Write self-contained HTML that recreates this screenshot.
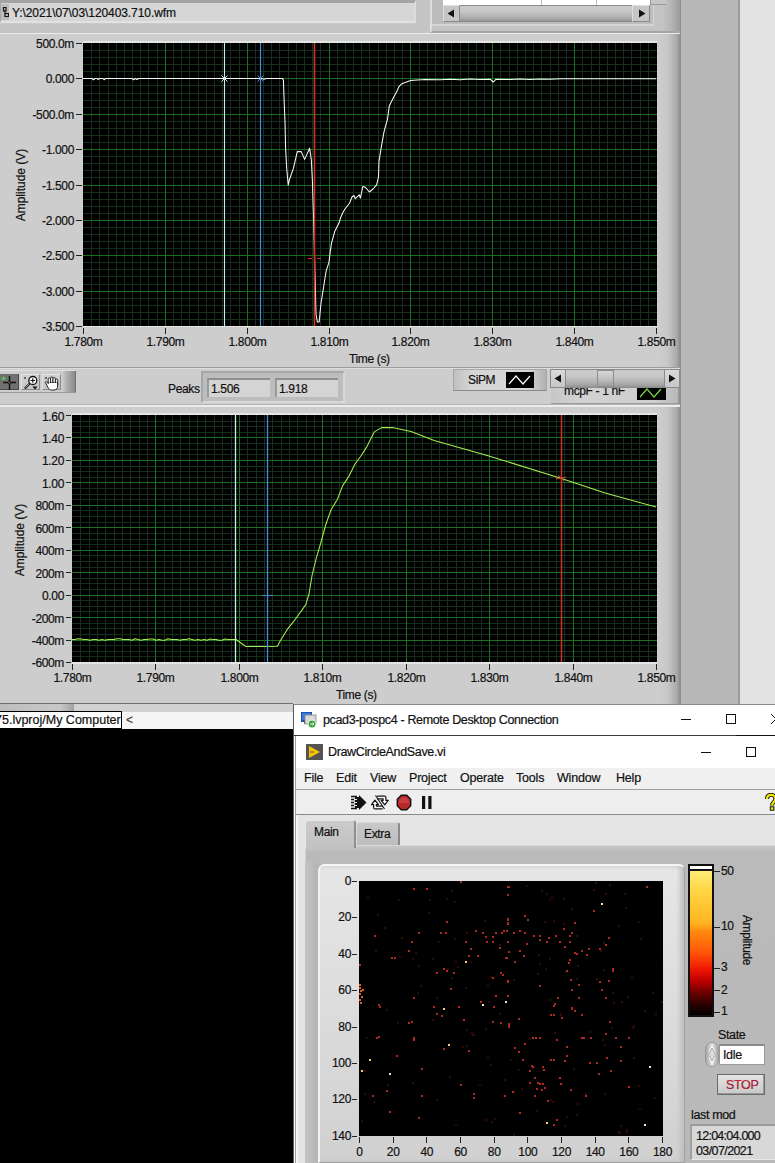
<!DOCTYPE html><html><head><meta charset="utf-8"><style>
*{box-sizing:border-box}
html,body{margin:0;padding:0}
body{width:775px;height:1163px;overflow:hidden;position:relative;background:#cdcdcd;font-family:"Liberation Sans",sans-serif;color:#111}
.a{position:absolute}
.t{position:absolute;white-space:nowrap;font-size:12px;line-height:14px;letter-spacing:-0.35px;-webkit-text-stroke:0.2px #111}
</style></head><body>
<div class="a" style="left:0;top:0;width:680px;height:34px;background:#c4c4c4"></div>
<div class="a" style="left:0;top:0;width:416px;height:24px;background:#c9c9c9"></div>
<div class="a" style="left:0;top:0;width:416px;height:23px;background:#d6d6d6;border-top:3px solid #a4a4a4;border-left:1px solid #a8a8a8;border-bottom:2px solid #e2e2e2;border-right:2px solid #dcdcdc"></div>
<div class="a" style="left:1px;top:4px;width:8px;height:16px;background:#bdbdbd"></div>
<svg class="a" style="left:2px;top:6px" width="7" height="11"><path d="M1.5 1.5h2.5v3.5h-2.5zM3 5v2.5M3 7.5h3.5v3h-3.5z" stroke="#111" stroke-width="1.2" fill="none"/></svg>
<div class="t" style="left:12px;top:6px;font-size:12px;letter-spacing:-0.08px;color:#111">Y:\2021\07\03\120403.710.wfm</div>
<div class="a" style="left:430px;top:0;width:250px;height:33px;background:#c4c4c4;border-left:2px solid #dedede;border-bottom:2px solid #a4a4a4"></div>
<div class="a" style="left:430px;top:0;width:250px;height:31px;background:linear-gradient(90deg,rgba(0,0,0,0) 0,rgba(0,0,0,0) 232px,#b8b8b8 240px,#9c9c9c 250px)"></div>
<div class="a" style="left:432px;top:0;width:222px;height:26px;background:#bcbcbc;border-right:1px solid #d8d8d8;border-bottom:2px solid #d4d4d4"></div>
<div class="a" style="left:443px;top:0;width:207px;height:5px;background:#fff"></div>
<div class="a" style="left:541px;top:0;width:1px;height:5px;background:#bbb"></div>
<div class="a" style="left:596px;top:0;width:1px;height:5px;background:#bbb"></div>
<div class="a" style="left:650px;top:0;width:16px;height:5px;background:#c6c6c6;border-left:1px solid #999;border-bottom:1px solid #999"></div>
<div class="a" style="left:443px;top:5px;width:207px;height:17px;background:linear-gradient(#cccccc,#c8c8c8 35%,#acacac 80%,#959595);border:1px solid #8a8a8a"></div>
<div class="a" style="left:443px;top:5px;width:17px;height:17px;background:#c6c6c6;border:1px solid #8a8a8a;border-top-color:#dedede;border-left-color:#dedede"></div>
<div class="a" style="left:632px;top:5px;width:18px;height:17px;background:#c6c6c6;border:1px solid #8a8a8a;border-top-color:#dedede;border-left-color:#dedede"></div>
<svg class="a" style="left:443px;top:5px" width="207" height="17"><path d="M4.5 8.5L11 4.5V12.5z" fill="#111"/><path d="M202.5 8.5L196 4.5V12.5z" fill="#111"/></svg>
<div class="a" style="left:0;top:33px;width:680px;height:1px;background:#ececec"></div>
<div class="a" style="left:660px;top:34px;width:20px;height:670px;background:linear-gradient(90deg,#cdcdcd,#c6c6c6 40%,#a8a8a8 85%,#8c8c8c)"></div>
<div class="a" style="left:680px;top:0;width:60px;height:704px;background:#b7b7b7;border-left:1px solid #8e8e8e;border-right:2px solid #9a9a9a"></div>
<div class="a" style="left:740px;top:0;width:35px;height:704px;background:#e3e3e3"></div>
<div class="a" style="left:83px;top:41px;width:574px;height:286px;background:#e4e4e4"></div>
<svg class="a" style="left:83px;top:43px" width="574" height="283">
<rect width="574" height="283" fill="#000"/>
<path d="M8.5 0V283M16.5 0V283M25.5 0V283M33.5 0V283M41.5 0V283M49.5 0V283M57.5 0V283M65.5 0V283M74.5 0V283M90.5 0V283M98.5 0V283M106.5 0V283M115.5 0V283M123.5 0V283M131.5 0V283M139.5 0V283M147.5 0V283M156.5 0V283M172.5 0V283M180.5 0V283M188.5 0V283M196.5 0V283M205.5 0V283M213.5 0V283M221.5 0V283M229.5 0V283M237.5 0V283M254.5 0V283M262.5 0V283M270.5 0V283M278.5 0V283M286.5 0V283M295.5 0V283M303.5 0V283M311.5 0V283M319.5 0V283M336.5 0V283M344.5 0V283M352.5 0V283M360.5 0V283M368.5 0V283M377.5 0V283M385.5 0V283M393.5 0V283M401.5 0V283M417.5 0V283M426.5 0V283M434.5 0V283M442.5 0V283M450.5 0V283M458.5 0V283M467.5 0V283M475.5 0V283M483.5 0V283M499.5 0V283M508.5 0V283M516.5 0V283M524.5 0V283M532.5 0V283M540.5 0V283M548.5 0V283M557.5 0V283M565.5 0V283M0 7.5H574M0 14.5H574M0 21.5H574M0 28.5H574M0 42.5H574M0 50.5H574M0 57.5H574M0 64.5H574M0 78.5H574M0 85.5H574M0 92.5H574M0 99.5H574M0 113.5H574M0 120.5H574M0 127.5H574M0 134.5H574M0 149.5H574M0 156.5H574M0 163.5H574M0 170.5H574M0 184.5H574M0 191.5H574M0 198.5H574M0 205.5H574M0 219.5H574M0 226.5H574M0 233.5H574M0 241.5H574M0 255.5H574M0 262.5H574M0 269.5H574M0 276.5H574" stroke="#162f1d" fill="none"/>
<path d="M82.5 0V283M164.5 0V283M246.5 0V283M327.5 0V283M409.5 0V283M491.5 0V283M0 35.5H574M0 71.5H574M0 106.5H574M0 142.5H574M0 177.5H574M0 212.5H574M0 248.5H574" stroke="#1a7020" fill="none"/>
<svg class="a" style="left:83px;top:43px" width="573" height="283">
<path d="M0 35.5 L9 35.5 L10.5 36.8 L12 35.5 L14 35.5 L15 36.5 L16.5 35.5 L20 35.5 L21 36.8 L22.5 35.5 L49 35.5 L50.5 36.8 L52 35.5 L54 36.5 L55.5 35.5 L157 35.5 L179 35.5 L181 36.3 L183 35.5 L199.3 35.4 L200.4 37 L200.9 51.6 L202 79.5 L202.6 105.2 L203.7 125.4 L205.2 142.1 L206.5 136.5 L210.4 125.4 L214.3 108.6 L218.3 108.6 L221.6 116.4 L226.6 105.2 L228.3 116.4 L229.4 137.7 L230.4 169 L231.2 200 L232.3 242.8 L233 271 L234.3 278.9 L236.2 278.9 L236.8 272.4 L238.1 259.5 L240 248 L242 235 L243.3 227.3 L245.9 219.6 L247.2 209.2 L248.5 200.2 L251.7 188.6 L256.2 179.6 L257.5 175 L260 169.3 L262 166 L266.5 160.2 L269.1 153.8 L271 152.5 L272.3 155.7 L276.2 151.8 L277.4 155 L279.8 143.6 L282.2 144.2 L286.4 149 L290 146 L293.6 141.8 L295.5 134 L296 118.3 L297.9 106.3 L300.9 89.4 L302.1 84.6 L304.5 76.2 L306.3 62.9 L308.1 59.3 L310.5 54.5 L313.5 49.1 L315.9 43.7 L318.9 40.7 L323.7 38.9 L327.3 37.6 L334.5 37 L342 36.6 L357 36.8 L367 36.2 L377 36.8 L387 36 L397 36.5 L407 36.2 L410.4 39 L413 36.2 L427 36.5 L437 36 L447 36.4 L457 36 L467 36.3 L478 35.8 L517 35.8 L574 35.8" stroke="#f8f8f8" stroke-width="1.05" fill="none" stroke-linejoin="round"/>
<path d="M141.5 0V283" stroke="#c0f0f4" stroke-width="1.1"/>
<path d="M177.5 0V283" stroke="#4a88d8" stroke-width="1.2"/>
<path d="M231.5 0V283" stroke="#d8342a" stroke-width="1.5"/>
<path d="M138.5 32.5l6 6M144.5 32.5l-6 6" stroke="#c0f0f4" stroke-width="1"/>
<path d="M174.5 32.5l6 6M180.5 32.5l-6 6" stroke="#4a88d8" stroke-width="1"/>
<path d="M225 215.5h4M234 215.5h4M231.5 210v3M231.5 218v3" stroke="#d8342a" stroke-width="1.2"/>
</svg>
<div class="t" style="right:701px;top:37px;text-align:right">500.0m</div>
<div class="a" style="left:76px;top:43px;width:6px;height:1px;background:#222"></div>
<div class="t" style="right:701px;top:72.4px;text-align:right">0.000</div>
<div class="a" style="left:76px;top:78px;width:6px;height:1px;background:#222"></div>
<div class="t" style="right:701px;top:107.8px;text-align:right">-500.0m</div>
<div class="a" style="left:76px;top:114px;width:6px;height:1px;background:#222"></div>
<div class="t" style="right:701px;top:143.2px;text-align:right">-1.000</div>
<div class="a" style="left:76px;top:149px;width:6px;height:1px;background:#222"></div>
<div class="t" style="right:701px;top:178.6px;text-align:right">-1.500</div>
<div class="a" style="left:76px;top:185px;width:6px;height:1px;background:#222"></div>
<div class="t" style="right:701px;top:214px;text-align:right">-2.000</div>
<div class="a" style="left:76px;top:220px;width:6px;height:1px;background:#222"></div>
<div class="t" style="right:701px;top:249.4px;text-align:right">-2.500</div>
<div class="a" style="left:76px;top:255px;width:6px;height:1px;background:#222"></div>
<div class="t" style="right:701px;top:284.8px;text-align:right">-3.000</div>
<div class="a" style="left:76px;top:291px;width:6px;height:1px;background:#222"></div>
<div class="t" style="right:701px;top:320.2px;text-align:right">-3.500</div>
<div class="a" style="left:76px;top:326px;width:6px;height:1px;background:#222"></div>
<div class="t" style="top:185px;left:20.5px;transform:translate(-50%,-50%) rotate(-90deg);letter-spacing:0">Amplitude (V)</div>
<div class="a" style="left:83px;top:328px;width:1px;height:6px;background:#222"></div>
<div class="t" style="left:83.5px;top:335px;width:60px;margin-left:-30px;text-align:center">1.780m</div>
<div class="a" style="left:165px;top:328px;width:1px;height:6px;background:#222"></div>
<div class="t" style="left:165.5px;top:335px;width:60px;margin-left:-30px;text-align:center">1.790m</div>
<div class="a" style="left:247px;top:328px;width:1px;height:6px;background:#222"></div>
<div class="t" style="left:247.5px;top:335px;width:60px;margin-left:-30px;text-align:center">1.800m</div>
<div class="a" style="left:329px;top:328px;width:1px;height:6px;background:#222"></div>
<div class="t" style="left:329.5px;top:335px;width:60px;margin-left:-30px;text-align:center">1.810m</div>
<div class="a" style="left:410px;top:328px;width:1px;height:6px;background:#222"></div>
<div class="t" style="left:410.5px;top:335px;width:60px;margin-left:-30px;text-align:center">1.820m</div>
<div class="a" style="left:492px;top:328px;width:1px;height:6px;background:#222"></div>
<div class="t" style="left:492.5px;top:335px;width:60px;margin-left:-30px;text-align:center">1.830m</div>
<div class="a" style="left:574px;top:328px;width:1px;height:6px;background:#222"></div>
<div class="t" style="left:574.5px;top:335px;width:60px;margin-left:-30px;text-align:center">1.840m</div>
<div class="a" style="left:656px;top:328px;width:1px;height:6px;background:#222"></div>
<div class="t" style="left:656.5px;top:335px;width:60px;margin-left:-30px;text-align:center">1.850m</div>
<div class="t" style="left:349px;top:352px">Time (s)</div>
<div class="a" style="left:0;top:367px;width:680px;height:1px;background:#9c9c9c"></div>
<div class="a" style="left:0;top:368px;width:680px;height:1px;background:#dedede"></div>
<div class="a" style="left:0;top:370px;width:76px;height:23px;background:linear-gradient(90deg,#cdcdcd 0,#cdcdcd 62px,#b4b4b4 66px,#8a8a8a 75px,#5a5a5a 76px);border-top:1px solid #e0e0e0;border-bottom:1px solid #9a9a9a"></div>
<div class="a" style="left:0;top:374px;width:19px;height:16px;background:#707070;border-right:1px solid #4a4a4a;border-bottom:1px solid #4a4a4a"></div>
<div class="a" style="left:21px;top:374px;width:19px;height:16px;background:linear-gradient(#d0d0d0,#c4c4c4);border-right:1px solid #8a8a8a;border-bottom:1px solid #8a8a8a;border-top:1px solid #e4e4e4;border-left:1px solid #e4e4e4"></div>
<div class="a" style="left:42px;top:374px;width:19px;height:16px;background:linear-gradient(#d0d0d0,#c4c4c4);border-right:1px solid #8a8a8a;border-bottom:1px solid #8a8a8a;border-top:1px solid #e4e4e4;border-left:1px solid #e4e4e4"></div>
<svg class="a" style="left:0;top:370px" width="76" height="23"><path d="M9.5 6V20M3 12.5H16" stroke="#111" stroke-width="1.4"/><circle cx="9.5" cy="12.5" r="1.5" fill="#707070" stroke="#111" stroke-width="1"/><path d="M1.5 8.5h4M3.5 6.5v4" stroke="#5c5" stroke-width="1.3"/><rect x="24" y="7" width="2" height="2" fill="#666"/><circle cx="32.8" cy="10.5" r="4" fill="#fff" stroke="#111" stroke-width="1.3"/><path d="M30.6 10.5h4.4M32.8 8.3v4.4" stroke="#111" stroke-width="1.1"/><path d="M29.8 13.5l-5 5" stroke="#111" stroke-width="2"/><path d="M25.2 17.8l4-4" stroke="#fff" stroke-width="0.6"/><path d="M32.5 16.5h5l-2.5 3z" fill="#111"/><rect x="45" y="7" width="2" height="2" fill="#666"/><rect x="48.2" y="8" width="2.4" height="8" rx="1.2" fill="#fff" stroke="#111" stroke-width="0.9"/><rect x="50.6" y="7" width="2.4" height="8" rx="1.2" fill="#fff" stroke="#111" stroke-width="0.9"/><rect x="53" y="7.6" width="2.4" height="8" rx="1.2" fill="#fff" stroke="#111" stroke-width="0.9"/><rect x="55.4" y="9" width="2.3" height="7" rx="1.15" fill="#fff" stroke="#111" stroke-width="0.9"/><path d="M48.2 13.5l-1.3-1.5c-0.8-0.8-1.8-0.2-1.3 0.7L48.5 18.5c0.8 1 1.8 1.5 3 1.5h2.5c2.2 0 3.7-1.8 3.7-4V13H48.2z" fill="#fff" stroke="#111" stroke-width="0.9"/><path d="M48.9 13.6H57" stroke="#fff" stroke-width="1.2"/></svg>
<div class="t" style="left:168px;top:382px;font-size:12px">Peaks</div>
<div class="a" style="left:201px;top:371px;width:144px;height:32px;background:#bdbdbd;border:2px solid #a6a6a6;border-right-color:#d8d8d8;border-bottom-color:#d8d8d8"></div>
<div class="a" style="left:207px;top:378px;width:63px;height:19px;background:#d4d4d4;border-top:2px solid #8f8f8f;border-left:2px solid #9a9a9a"></div>
<div class="a" style="left:275px;top:378px;width:63px;height:19px;background:#d4d4d4;border-top:2px solid #8f8f8f;border-left:2px solid #9a9a9a"></div>
<div class="t" style="left:211px;top:382px">1.506</div>
<div class="t" style="left:279px;top:382px">1.918</div>
<div class="a" style="left:453px;top:369px;width:94px;height:22px;background:linear-gradient(90deg,#c0c0c0,#d6d6d6 20%,#d6d6d6 80%,#b0b0b0);border:1px solid #a8a8a8;border-bottom-color:#8a8a8a"></div>
<div class="t" style="left:468px;top:373px">SiPM</div>
<svg class="a" style="left:506px;top:372px" width="28" height="16"><rect width="28" height="16" fill="#000"/><path d="M3 12L10 4L17 12L24 4" stroke="#fff" stroke-width="1.2" fill="none"/></svg>
<div class="a" style="left:551px;top:383px;width:127px;height:21px;background:linear-gradient(90deg,#c6c6c6,#d2d2d2 20%,#cfcfcf 80%,#b8b8b8);border-bottom:1px solid #9a9a9a"></div>
<div class="t" style="left:564px;top:384px;font-size:12px">mcpF - 1 nF</div>
<svg class="a" style="left:637px;top:386px" width="29" height="14"><rect width="29" height="14" fill="#000"/><path d="M3 11L10 3L17 11L24 3" stroke="#7ad23a" stroke-width="1.2" fill="none"/></svg>
<div class="a" style="left:550px;top:369px;width:130px;height:19px;background:linear-gradient(#cccccc,#c8c8c8 35%,#acacac 80%,#959595);border:1px solid #8c8c8c"></div>
<div class="a" style="left:550px;top:369px;width:16px;height:19px;background:linear-gradient(#dadada,#c6c6c6);border:1px solid #8a8a8a"></div>
<div class="a" style="left:664px;top:369px;width:16px;height:19px;background:linear-gradient(#dadada,#c6c6c6);border:1px solid #8a8a8a"></div>
<div class="a" style="left:597px;top:370px;width:17px;height:17px;background:linear-gradient(#d8d8d8,#bcbcbc 60%,#9c9c9c);border:1px solid #8c8c8c"></div>
<svg class="a" style="left:550px;top:369px" width="130" height="19"><path d="M4.5 9.5L11 5.5V13.5z" fill="#111"/><path d="M125.5 9.5L119 5.5V13.5z" fill="#111"/></svg>
<div class="a" style="left:0;top:404px;width:680px;height:1px;background:#b4b4b4"></div>
<div class="a" style="left:0;top:405px;width:680px;height:2px;background:#ececec"></div>
<div class="a" style="left:72px;top:413px;width:585px;height:251px;background:#e4e4e4"></div>
<svg class="a" style="left:72px;top:415px" width="585" height="247">
<rect width="585" height="247" fill="#000"/>
<path d="M8.5 0V247M17.5 0V247M25.5 0V247M33.5 0V247M42.5 0V247M50.5 0V247M58.5 0V247M67.5 0V247M75.5 0V247M92.5 0V247M100.5 0V247M108.5 0V247M117.5 0V247M125.5 0V247M133.5 0V247M142.5 0V247M150.5 0V247M159.5 0V247M175.5 0V247M184.5 0V247M192.5 0V247M200.5 0V247M209.5 0V247M217.5 0V247M225.5 0V247M234.5 0V247M242.5 0V247M259.5 0V247M267.5 0V247M275.5 0V247M284.5 0V247M292.5 0V247M300.5 0V247M309.5 0V247M317.5 0V247M325.5 0V247M342.5 0V247M350.5 0V247M359.5 0V247M367.5 0V247M375.5 0V247M384.5 0V247M392.5 0V247M400.5 0V247M409.5 0V247M425.5 0V247M434.5 0V247M442.5 0V247M451.5 0V247M459.5 0V247M467.5 0V247M476.5 0V247M484.5 0V247M492.5 0V247M509.5 0V247M517.5 0V247M526.5 0V247M534.5 0V247M542.5 0V247M551.5 0V247M559.5 0V247M567.5 0V247M576.5 0V247M0 6.5H585M0 11.5H585M0 17.5H585M0 28.5H585M0 34.5H585M0 39.5H585M0 51.5H585M0 56.5H585M0 62.5H585M0 73.5H585M0 79.5H585M0 84.5H585M0 95.5H585M0 101.5H585M0 107.5H585M0 118.5H585M0 124.5H585M0 129.5H585M0 140.5H585M0 146.5H585M0 152.5H585M0 163.5H585M0 168.5H585M0 174.5H585M0 185.5H585M0 191.5H585M0 196.5H585M0 208.5H585M0 213.5H585M0 219.5H585M0 230.5H585M0 236.5H585M0 241.5H585" stroke="#162f1d" fill="none"/>
<path d="M83.5 0V247M167.5 0V247M250.5 0V247M334.5 0V247M417.5 0V247M501.5 0V247M0 22.5H585M0 45.5H585M0 67.5H585M0 90.5H585M0 112.5H585M0 135.5H585M0 157.5H585M0 180.5H585M0 202.5H585M0 225.5H585" stroke="#1a7020" fill="none"/>
<svg class="a" style="left:72px;top:415px" width="584" height="247">
<path d="M0 224.5 L3 224.5 L6 223.7 L9 224 L12 224.5 L15 224.5 L18 225.3 L21 224.5 L24 224.5 L27 225.3 L30 224.5 L33 225.3 L36 224.5 L39 224.5 L42 224.5 L45 223.7 L48 223.7 L51 224.5 L54 224.5 L57 224.5 L60 225.3 L63 223.7 L66 224.5 L69 225.3 L72 224.5 L75 224.5 L78 224 L81 224 L84 225.3 L87 224.5 L90 225.3 L93 225.3 L96 223.7 L99 224.5 L102 224.5 L105 224.5 L108 225.3 L111 224.5 L114 224.5 L117 223.7 L120 224.5 L123 225.3 L126 224.5 L129 225.3 L132 224.5 L135 225.3 L138 224 L141 224.5 L144 224.5 L147 225.3 L150 225.3 L153 224 L156 224.5 L159 224.5 L164 224.5 L169 228 L174 231.6 L188 231.4 L205.4 231.3 L208.5 225.4 L214.9 214.9 L223.3 204.3 L233.8 189.6 L237 179 L240.1 160.1 L244.3 143.2 L248.6 128.5 L253.8 109.5 L259.1 94.8 L265.4 84.3 L270.7 70.6 L277 61.1 L283.3 48.5 L289.6 40 L294.9 31.6 L302.3 16.9 L309.6 12.6 L320.2 12.6 L328.6 14.3 L339.1 16.4 L348 20 L362.2 25.6 L416.9 41 L488.7 63.2 L533.1 78 L585 92.3" stroke="#a4ee50" stroke-width="1.05" fill="none" stroke-linejoin="round"/>
<path d="M163.5 0V247" stroke="#c8f0e8" stroke-width="1.3"/>
<path d="M195.5 0V247" stroke="#4a88d8" stroke-width="1.3"/>
<path d="M489.5 0V247" stroke="#d0342a" stroke-width="1.5"/>
<path d="M190 180.5h11" stroke="#4a88d8" stroke-width="1"/>
<path d="M484 64l10 -2M486 60l6 6" stroke="#d04030" stroke-width="1"/>
</svg>
<div class="t" style="right:711px;top:409.5px;text-align:right">1.60</div>
<div class="a" style="left:66px;top:415px;width:5px;height:1px;background:#222"></div>
<div class="t" style="right:711px;top:431.95px;text-align:right">1.40</div>
<div class="a" style="left:66px;top:437px;width:5px;height:1px;background:#222"></div>
<div class="t" style="right:711px;top:454.4px;text-align:right">1.20</div>
<div class="a" style="left:66px;top:460px;width:5px;height:1px;background:#222"></div>
<div class="t" style="right:711px;top:476.85px;text-align:right">1.00</div>
<div class="a" style="left:66px;top:482px;width:5px;height:1px;background:#222"></div>
<div class="t" style="right:711px;top:499.3px;text-align:right">800m</div>
<div class="a" style="left:66px;top:505px;width:5px;height:1px;background:#222"></div>
<div class="t" style="right:711px;top:521.75px;text-align:right">600m</div>
<div class="a" style="left:66px;top:527px;width:5px;height:1px;background:#222"></div>
<div class="t" style="right:711px;top:544.2px;text-align:right">400m</div>
<div class="a" style="left:66px;top:550px;width:5px;height:1px;background:#222"></div>
<div class="t" style="right:711px;top:566.65px;text-align:right">200m</div>
<div class="a" style="left:66px;top:572px;width:5px;height:1px;background:#222"></div>
<div class="t" style="right:711px;top:589.1px;text-align:right">0.00</div>
<div class="a" style="left:66px;top:595px;width:5px;height:1px;background:#222"></div>
<div class="t" style="right:711px;top:611.55px;text-align:right">-200m</div>
<div class="a" style="left:66px;top:617px;width:5px;height:1px;background:#222"></div>
<div class="t" style="right:711px;top:634px;text-align:right">-400m</div>
<div class="a" style="left:66px;top:640px;width:5px;height:1px;background:#222"></div>
<div class="t" style="right:711px;top:656.45px;text-align:right">-600m</div>
<div class="a" style="left:66px;top:662px;width:5px;height:1px;background:#222"></div>
<div class="t" style="top:539.5px;left:20px;transform:translate(-50%,-50%) rotate(-90deg);letter-spacing:0">Amplitude (V)</div>
<div class="a" style="left:72px;top:664px;width:1px;height:6px;background:#222"></div>
<div class="t" style="left:72.5px;top:671px;width:60px;margin-left:-30px;text-align:center">1.780m</div>
<div class="a" style="left:155px;top:664px;width:1px;height:6px;background:#222"></div>
<div class="t" style="left:155.5px;top:671px;width:60px;margin-left:-30px;text-align:center">1.790m</div>
<div class="a" style="left:239px;top:664px;width:1px;height:6px;background:#222"></div>
<div class="t" style="left:239.5px;top:671px;width:60px;margin-left:-30px;text-align:center">1.800m</div>
<div class="a" style="left:322px;top:664px;width:1px;height:6px;background:#222"></div>
<div class="t" style="left:322.5px;top:671px;width:60px;margin-left:-30px;text-align:center">1.810m</div>
<div class="a" style="left:406px;top:664px;width:1px;height:6px;background:#222"></div>
<div class="t" style="left:406.5px;top:671px;width:60px;margin-left:-30px;text-align:center">1.820m</div>
<div class="a" style="left:489px;top:664px;width:1px;height:6px;background:#222"></div>
<div class="t" style="left:489.5px;top:671px;width:60px;margin-left:-30px;text-align:center">1.830m</div>
<div class="a" style="left:573px;top:664px;width:1px;height:6px;background:#222"></div>
<div class="t" style="left:573.5px;top:671px;width:60px;margin-left:-30px;text-align:center">1.840m</div>
<div class="a" style="left:656px;top:664px;width:1px;height:6px;background:#222"></div>
<div class="t" style="left:656.5px;top:671px;width:60px;margin-left:-30px;text-align:center">1.850m</div>
<div class="t" style="left:336px;top:688px">Time (s)</div>
<div class="a" style="left:0;top:703px;width:293px;height:1px;background:#6e6e6e"></div>
<div class="a" style="left:0;top:704px;width:293px;height:8px;background:#d2d2d2"></div>
<div class="a" style="left:0;top:704px;width:74px;height:8px;background:linear-gradient(90deg,#bdbdbd 0,#c8c8c8 60px,#a0a0a0 74px)"></div>
<div class="a" style="left:0;top:712px;width:293px;height:17px;background:#f5f5f5"></div>
<div class="a" style="left:-2px;top:711px;width:124px;height:18px;background:#fff;border:1px solid #000"></div>
<div class="t" style="left:-5px;top:713px;font-size:12.5px;letter-spacing:0;color:#111">75.lvproj/My Computer</div>
<div class="t" style="left:126px;top:713px;font-size:12px;color:#555">&lt;</div>
<div class="a" style="left:0;top:729px;width:293px;height:434px;background:#000"></div>
<div class="a" style="left:293px;top:704px;width:482px;height:459px;background:#fff;border-left:1px solid #5a5a5a;border-top:1px solid #8a8a8a"></div>
<svg class="a" style="left:300px;top:711px" width="18" height="18"><rect x="1" y="1" width="11" height="10" fill="#1a4fb0"/><rect x="2" y="2" width="9" height="7" fill="#3a7ae0"/><rect x="4" y="11" width="5" height="2" fill="#666"/><rect x="5" y="4" width="11" height="9" fill="#d8d8d8" stroke="#888" stroke-width="0.8"/><circle cx="12" cy="13" r="4" fill="#3aa23a" stroke="#fff" stroke-width="0.8"/><path d="M10 13h4M12.5 11.5l1.5 1.5l-1.5 1.5" stroke="#fff" stroke-width="0.9" fill="none"/></svg>
<div class="t" style="left:323px;top:713px;font-size:12.5px;color:#111">pcad3-pospc4 - Remote Desktop Connection</div>
<div class="a" style="left:681px;top:719px;width:10px;height:1px;background:#111"></div>
<div class="a" style="left:726px;top:714px;width:10px;height:10px;border:1px solid #111"></div>
<svg class="a" style="left:770px;top:713px" width="5" height="12"><path d="M1 1L11 11M11 1L1 11" stroke="#111" stroke-width="1"/></svg>
<div class="a" style="left:294px;top:735px;width:481px;height:1px;background:#3a3a3a"></div>
<div class="a" style="left:736px;top:735px;width:39px;height:2px;background:#111"></div>
<div class="a" style="left:295px;top:736px;width:480px;height:427px;background:#fff;border-left:1px solid #9a9a9a"></div>
<svg class="a" style="left:306px;top:744px" width="17" height="16"><rect width="17" height="16" fill="#545454"/><path d="M3 2L14 8L3 14z" fill="#f5c400"/><path d="M4 8h4" stroke="#545454" stroke-width="1"/></svg>
<div class="t" style="left:328px;top:745px;font-size:12.5px;color:#111">DrawCircleAndSave.vi</div>
<div class="a" style="left:701px;top:752px;width:10px;height:1px;background:#111"></div>
<div class="a" style="left:746px;top:747px;width:10px;height:10px;border:1px solid #111"></div>
<div class="a" style="left:296px;top:768px;width:479px;height:21px;background:#f0f0f0"></div>
<div class="t" style="left:304px;top:771px;font-size:12.5px;letter-spacing:-0.2px;color:#111">File</div>
<div class="t" style="left:336px;top:771px;font-size:12.5px;letter-spacing:-0.2px;color:#111">Edit</div>
<div class="t" style="left:370px;top:771px;font-size:12.5px;letter-spacing:-0.2px;color:#111">View</div>
<div class="t" style="left:409px;top:771px;font-size:12.5px;letter-spacing:-0.2px;color:#111">Project</div>
<div class="t" style="left:460px;top:771px;font-size:12.5px;letter-spacing:-0.2px;color:#111">Operate</div>
<div class="t" style="left:516px;top:771px;font-size:12.5px;letter-spacing:-0.2px;color:#111">Tools</div>
<div class="t" style="left:557px;top:771px;font-size:12.5px;letter-spacing:-0.2px;color:#111">Window</div>
<div class="t" style="left:616px;top:771px;font-size:12.5px;letter-spacing:-0.2px;color:#111">Help</div>
<div class="a" style="left:296px;top:789px;width:479px;height:1px;background:#a0a0a0"></div>
<div class="a" style="left:296px;top:790px;width:479px;height:24px;background:#eeeeee"></div>
<div class="a" style="left:296px;top:814px;width:479px;height:1px;background:#8a8a8a"></div>
<svg class="a" style="left:345px;top:790px" width="90" height="25"><path d="M6 6.5h6M6 9.5h6M6 12.5h6M6 15.5h6M6 18.5h6" stroke="#111" stroke-width="1.6"/><path d="M10 7h4V5l7.5 7.5L14 20v-2h-4z" fill="#111"/><path d="M9 9.5h3M9 12.5h3M9 15.5h3" stroke="#fff" stroke-width="0.9"/><path d="M32 7.5H39.5V11M37.5 17.5H30V14" stroke="#111" stroke-width="4" fill="none" stroke-linejoin="round"/><path d="M36.3 10.3L43.2 10.3L39.75 14.8z" fill="#fff" stroke="#111" stroke-width="1.2" stroke-linejoin="round"/><path d="M26.5 14.7L33.4 14.7L29.95 10.2z" fill="#fff" stroke="#111" stroke-width="1.2" stroke-linejoin="round"/><path d="M32 7.5H39.5V11.5M37.5 17.5H30V13.5" stroke="#fff" stroke-width="1.6" fill="none"/><path d="M30.5 5.5L39.5 19" stroke="#111" stroke-width="1.1"/><path d="M56.3 5.3h5.4l4 4v6.4l-4 4h-5.4l-4-4V9.3z" fill="#b82a2a" stroke="#111" stroke-width="1.4"/><path d="M57 7.5h4l2.5 2.5v3h-9v-3z" fill="#d85050" opacity="0.5"/><rect x="77" y="6" width="3.2" height="13" fill="#111"/><rect x="83.3" y="6" width="3.2" height="13" fill="#111"/></svg>
<svg class="a" style="left:764px;top:793px" width="11" height="18"><path d="M3 6c0-3 2-4.2 4.2-4.2S11.5 3.5 11.5 6c0 2.5-3.3 3.2-3.3 5.8v0.7" stroke="#111" stroke-width="4" fill="none"/><path d="M3 6c0-3 2-4.2 4.2-4.2S11.5 3.5 11.5 6c0 2.5-3.3 3.2-3.3 5.8v0.7" stroke="#f0e800" stroke-width="2.2" fill="none"/><rect x="6.3" y="13.8" width="3.6" height="3.4" fill="#f0e800" stroke="#111" stroke-width="1"/></svg>
<div class="a" style="left:296px;top:815px;width:479px;height:348px;background:#e4e4e4"></div>
<div class="a" style="left:296px;top:815px;width:2px;height:348px;background:#f4f4f4"></div>
<div class="a" style="left:305px;top:845px;width:470px;height:318px;background:linear-gradient(#c8c8c8,#bababa 6px,#b9b9b9);border-top:1px solid #d8d8d8;border-left:1px solid #d0d0d0"></div>
<div class="a" style="left:305px;top:820px;width:51px;height:28px;background:linear-gradient(#cbcbcb,#c2c2c2);border:1px solid #e6e6e6;border-right:2px solid #8e8e8e;border-bottom:none;border-radius:3px 3px 0 0"></div>
<div class="a" style="left:306px;top:846px;width:48px;height:3px;background:#c2c2c2"></div>
<div class="t" style="left:314px;top:825px;font-size:12px">Main</div>
<div class="a" style="left:356px;top:822px;width:44px;height:23px;background:linear-gradient(#c8c8c8,#bdbdbd);border:1px solid #dadada;border-right:2px solid #8a8a8a;border-bottom:none;border-radius:3px 3px 0 0"></div>
<div class="t" style="left:364px;top:827px;font-size:12px">Extra</div>
<div class="a" style="left:318px;top:864px;width:367px;height:299px;background:linear-gradient(#e6e6e6,#dcdcdc 50%,#d0d0d0);border:1px solid #a0a0a0;border-top:2px solid #f6f6f6;border-left:2px solid #f2f2f2;border-radius:6px 6px 0 0;box-shadow:inset -4px 0 4px #c0c0c0,-1px 0 0 #9a9a9a"></div>
<div class="a" style="left:305px;top:862px;width:13px;height:301px;background:linear-gradient(90deg,#c4c4c4,#b4b4b4)"></div>
<svg class="a" style="left:359px;top:881px" width="304" height="255"><rect width="304" height="255" fill="#000"/>
<rect x="73" y="138" width="2" height="2" fill="#2e0a08"/>
<rect x="113" y="153" width="2" height="2" fill="#2e0a08"/>
<rect x="190" y="18" width="2" height="2" fill="#2e0a08"/>
<rect x="5" y="212" width="2" height="2" fill="#2e0a08"/>
<rect x="79" y="60" width="2" height="2" fill="#2e0a08"/>
<rect x="302" y="120" width="2" height="2" fill="#2e0a08"/>
<rect x="254" y="121" width="2" height="2" fill="#2e0a08"/>
<rect x="194" y="39" width="2" height="2" fill="#2e0a08"/>
<rect x="193" y="220" width="2" height="2" fill="#2e0a08"/>
<rect x="159" y="188" width="2" height="2" fill="#2e0a08"/>
<rect x="204" y="17" width="2" height="2" fill="#2e0a08"/>
<rect x="230" y="150" width="2" height="2" fill="#2e0a08"/>
<rect x="92" y="9" width="2" height="2" fill="#2e0a08"/>
<rect x="262" y="120" width="2" height="2" fill="#2e0a08"/>
<rect x="218" y="222" width="2" height="2" fill="#2e0a08"/>
<rect x="217" y="233" width="2" height="2" fill="#2e0a08"/>
<rect x="120" y="203" width="2" height="2" fill="#2e0a08"/>
<rect x="135" y="237" width="2" height="2" fill="#2e0a08"/>
<rect x="266" y="26" width="2" height="2" fill="#2e0a08"/>
<rect x="42" y="56" width="2" height="2" fill="#2e0a08"/>
<rect x="293" y="111" width="2" height="2" fill="#2e0a08"/>
<rect x="190" y="77" width="2" height="2" fill="#2e0a08"/>
<rect x="154" y="98" width="2" height="2" fill="#2e0a08"/>
<rect x="107" y="148" width="2" height="2" fill="#2e0a08"/>
<rect x="177" y="229" width="2" height="2" fill="#2e0a08"/>
<rect x="207" y="235" width="2" height="2" fill="#2e0a08"/>
<rect x="260" y="251" width="2" height="2" fill="#2e0a08"/>
<rect x="204" y="42" width="2" height="2" fill="#2e0a08"/>
<rect x="261" y="244" width="2" height="2" fill="#2e0a08"/>
<rect x="274" y="144" width="2" height="2" fill="#2e0a08"/>
<rect x="217" y="54" width="2" height="2" fill="#2e0a08"/>
<rect x="252" y="146" width="2" height="2" fill="#2e0a08"/>
<rect x="87" y="17" width="2" height="2" fill="#2e0a08"/>
<rect x="259" y="250" width="2" height="2" fill="#2e0a08"/>
<rect x="28" y="203" width="2" height="2" fill="#2e0a08"/>
<rect x="125" y="39" width="2" height="2" fill="#2e0a08"/>
<rect x="90" y="195" width="2" height="2" fill="#2e0a08"/>
<rect x="265" y="12" width="2" height="2" fill="#2e0a08"/>
<rect x="187" y="12" width="2" height="2" fill="#2e0a08"/>
<rect x="218" y="84" width="2" height="2" fill="#2e0a08"/>
<rect x="267" y="248" width="2" height="2" fill="#2e0a08"/>
<rect x="154" y="253" width="2" height="2" fill="#2e0a08"/>
<rect x="95" y="20" width="2" height="2" fill="#2e0a08"/>
<rect x="182" y="9" width="2" height="2" fill="#2e0a08"/>
<rect x="61" y="104" width="2" height="2" fill="#2e0a08"/>
<rect x="185" y="40" width="2" height="2" fill="#2e0a08"/>
<rect x="14" y="220" width="2" height="2" fill="#2e0a08"/>
<rect x="96" y="243" width="2" height="2" fill="#2e0a08"/>
<rect x="272" y="96" width="2" height="2" fill="#2e0a08"/>
<rect x="140" y="132" width="2" height="2" fill="#2e0a08"/>
<rect x="195" y="151" width="2" height="2" fill="#2e0a08"/>
<rect x="170" y="157" width="2" height="2" fill="#2e0a08"/>
<rect x="285" y="129" width="2" height="2" fill="#2e0a08"/>
<rect x="131" y="183" width="2" height="2" fill="#2e0a08"/>
<rect x="73" y="77" width="2" height="2" fill="#2e0a08"/>
<rect x="296" y="132" width="2" height="2" fill="#2e0a08"/>
<rect x="167" y="4" width="2" height="2" fill="#2e0a08"/>
<rect x="126" y="147" width="2" height="2" fill="#2e0a08"/>
<rect x="7" y="156" width="2" height="2" fill="#2e0a08"/>
<rect x="192" y="16" width="2" height="2" fill="#2e0a08"/>
<rect x="190" y="118" width="2" height="2" fill="#2e0a08"/>
<rect x="206" y="90" width="2" height="2" fill="#2e0a08"/>
<rect x="214" y="187" width="2" height="2" fill="#2e0a08"/>
<rect x="8" y="16" width="2" height="2" fill="#2e0a08"/>
<rect x="205" y="244" width="2" height="2" fill="#2e0a08"/>
<rect x="77" y="116" width="2" height="2" fill="#2e0a08"/>
<rect x="180" y="82" width="2" height="2" fill="#2e0a08"/>
<rect x="111" y="80" width="2" height="2" fill="#2e0a08"/>
<rect x="112" y="151" width="2" height="2" fill="#2e0a08"/>
<rect x="92" y="96" width="2" height="2" fill="#2e0a08"/>
<rect x="234" y="8" width="2" height="2" fill="#2e0a08"/>
<rect x="173" y="186" width="2" height="2" fill="#2e0a08"/>
<rect x="95" y="57" width="2" height="2" fill="#2e0a08"/>
<rect x="244" y="61" width="2" height="2" fill="#2e0a08"/>
<rect x="58" y="111" width="2" height="2" fill="#2e0a08"/>
<rect x="212" y="27" width="2" height="2" fill="#2e0a08"/>
<rect x="98" y="85" width="2" height="2" fill="#2e0a08"/>
<rect x="253" y="111" width="2" height="2" fill="#2e0a08"/>
<rect x="259" y="44" width="2" height="2" fill="#2e0a08"/>
<rect x="103" y="165" width="2" height="2" fill="#2e0a08"/>
<rect x="268" y="115" width="2" height="2" fill="#2e0a08"/>
<rect x="69" y="31" width="2" height="2" fill="#2e0a08"/>
<rect x="161" y="49" width="2" height="2" fill="#2e0a08"/>
<rect x="245" y="212" width="2" height="2" fill="#2e0a08"/>
<rect x="56" y="71" width="2" height="2" fill="#2e0a08"/>
<rect x="245" y="163" width="2" height="2" fill="#2e0a08"/>
<rect x="244" y="88" width="2" height="2" fill="#2e0a08"/>
<rect x="40" y="75" width="2" height="2" fill="#2e0a08"/>
<rect x="241" y="69" width="2" height="2" fill="#2e0a08"/>
<rect x="106" y="106" width="2" height="2" fill="#2e0a08"/>
<rect x="128" y="104" width="2" height="2" fill="#2e0a08"/>
<rect x="279" y="40" width="2" height="2" fill="#2e0a08"/>
<rect x="2" y="239" width="2" height="2" fill="#2e0a08"/>
<rect x="267" y="250" width="2" height="2" fill="#2e0a08"/>
<rect x="132" y="240" width="2" height="2" fill="#2e0a08"/>
<rect x="281" y="57" width="2" height="2" fill="#2e0a08"/>
<rect x="226" y="212" width="2" height="2" fill="#2e0a08"/>
<rect x="201" y="132" width="2" height="2" fill="#2e0a08"/>
<rect x="88" y="87" width="2" height="2" fill="#2e0a08"/>
<rect x="70" y="18" width="2" height="2" fill="#2e0a08"/>
<rect x="179" y="73" width="2" height="2" fill="#2e0a08"/>
<rect x="246" y="12" width="2" height="2" fill="#2e0a08"/>
<rect x="274" y="176" width="2" height="2" fill="#2e0a08"/>
<rect x="280" y="227" width="2" height="2" fill="#2e0a08"/>
<rect x="273" y="146" width="2" height="2" fill="#2e0a08"/>
<rect x="5" y="189" width="2" height="2" fill="#2e0a08"/>
<rect x="53" y="77" width="2" height="2" fill="#2e0a08"/>
<rect x="201" y="133" width="2" height="2" fill="#2e0a08"/>
<rect x="126" y="238" width="2" height="2" fill="#2e0a08"/>
<rect x="186" y="87" width="2" height="2" fill="#2e0a08"/>
<rect x="77" y="218" width="2" height="2" fill="#2e0a08"/>
<rect x="145" y="198" width="2" height="2" fill="#2e0a08"/>
<rect x="107" y="51" width="2" height="2" fill="#2e0a08"/>
<rect x="162" y="207" width="2" height="2" fill="#2e0a08"/>
<rect x="53" y="201" width="2" height="2" fill="#2e0a08"/>
<rect x="279" y="204" width="2" height="2" fill="#2e0a08"/>
<rect x="250" y="3" width="2" height="2" fill="#2e0a08"/>
<rect x="191" y="218" width="2" height="2" fill="#2e0a08"/>
<rect x="16" y="69" width="2" height="2" fill="#2e0a08"/>
<rect x="82" y="134" width="2" height="2" fill="#2e0a08"/>
<rect x="129" y="120" width="2" height="2" fill="#2e0a08"/>
<rect x="236" y="1" width="2" height="2" fill="#2e0a08"/>
<rect x="18" y="33" width="2" height="2" fill="#2e0a08"/>
<rect x="39" y="18" width="2" height="2" fill="#2e0a08"/>
<rect x="295" y="216" width="2" height="2" fill="#2e0a08"/>
<rect x="27" y="128" width="2" height="2" fill="#2e0a08"/>
<rect x="96" y="80" width="2" height="2" fill="#2e0a08"/>
<rect x="107" y="164" width="2" height="2" fill="#2e0a08"/>
<rect x="178" y="92" width="2" height="2" fill="#2e0a08"/>
<rect x="59" y="84" width="2" height="2" fill="#2e0a08"/>
<rect x="38" y="141" width="2" height="2" fill="#2e0a08"/>
<rect x="217" y="97" width="2" height="2" fill="#2e0a08"/>
<rect x="25" y="46" width="2" height="2" fill="#2e0a08"/>
<rect x="114" y="153" width="2" height="2" fill="#2e0a08"/>
<rect x="237" y="97" width="2" height="2" fill="#2e0a08"/>
<rect x="243" y="158" width="2" height="2" fill="#2e0a08"/>
<rect x="131" y="95" width="2" height="2" fill="#2e0a08"/>
<rect x="151" y="178" width="2" height="2" fill="#2e0a08"/>
<rect x="128" y="176" width="2" height="2" fill="#2e0a08"/>
<rect x="140" y="63" width="2" height="2" fill="#2e0a08"/>
<rect x="54" y="7" width="2" height="2" fill="#b02a24"/>
<rect x="67" y="7" width="2" height="2" fill="#b02a24"/>
<rect x="101" y="0" width="2" height="2" fill="#b02a24"/>
<rect x="148" y="5" width="2" height="2" fill="#b02a24"/>
<rect x="148" y="13" width="2" height="2" fill="#b02a24"/>
<rect x="87" y="40" width="2" height="2" fill="#b02a24"/>
<rect x="59" y="51" width="2" height="2" fill="#b02a24"/>
<rect x="81" y="51" width="2" height="2" fill="#b02a24"/>
<rect x="86" y="51" width="2" height="2" fill="#b02a24"/>
<rect x="15" y="54" width="2" height="2" fill="#b02a24"/>
<rect x="52" y="60" width="2" height="2" fill="#b02a24"/>
<rect x="49" y="69" width="2" height="2" fill="#b02a24"/>
<rect x="32" y="76" width="2" height="2" fill="#b02a24"/>
<rect x="35" y="76" width="2" height="2" fill="#b02a24"/>
<rect x="106" y="60" width="2" height="2" fill="#b02a24"/>
<rect x="111" y="67" width="2" height="2" fill="#b02a24"/>
<rect x="116" y="49" width="2" height="2" fill="#b02a24"/>
<rect x="123" y="51" width="2" height="2" fill="#b02a24"/>
<rect x="126" y="55" width="2" height="2" fill="#b02a24"/>
<rect x="127" y="60" width="2" height="2" fill="#b02a24"/>
<rect x="133" y="55" width="2" height="2" fill="#b02a24"/>
<rect x="133" y="60" width="2" height="2" fill="#b02a24"/>
<rect x="136" y="51" width="2" height="2" fill="#b02a24"/>
<rect x="142" y="51" width="2" height="2" fill="#b02a24"/>
<rect x="144" y="49" width="2" height="2" fill="#b02a24"/>
<rect x="148" y="38" width="2" height="2" fill="#b02a24"/>
<rect x="148" y="42" width="2" height="2" fill="#b02a24"/>
<rect x="148" y="60" width="2" height="2" fill="#b02a24"/>
<rect x="140" y="66" width="2" height="2" fill="#b02a24"/>
<rect x="109" y="74" width="2" height="2" fill="#b02a24"/>
<rect x="118" y="74" width="2" height="2" fill="#b02a24"/>
<rect x="146" y="76" width="2" height="2" fill="#b02a24"/>
<rect x="0" y="83" width="2" height="2" fill="#b02a24"/>
<rect x="84" y="87" width="2" height="2" fill="#b02a24"/>
<rect x="87" y="89" width="2" height="2" fill="#b02a24"/>
<rect x="77" y="91" width="2" height="2" fill="#b02a24"/>
<rect x="94" y="91" width="2" height="2" fill="#b02a24"/>
<rect x="141" y="91" width="2" height="2" fill="#b02a24"/>
<rect x="143" y="93" width="2" height="2" fill="#b02a24"/>
<rect x="133" y="96" width="2" height="2" fill="#b02a24"/>
<rect x="148" y="100" width="2" height="2" fill="#b02a24"/>
<rect x="91" y="107" width="2" height="2" fill="#b02a24"/>
<rect x="54" y="116" width="2" height="2" fill="#b02a24"/>
<rect x="136" y="114" width="2" height="2" fill="#b02a24"/>
<rect x="148" y="114" width="2" height="2" fill="#b02a24"/>
<rect x="121" y="120" width="2" height="2" fill="#b02a24"/>
<rect x="19" y="123" width="2" height="2" fill="#b02a24"/>
<rect x="74" y="125" width="2" height="2" fill="#b02a24"/>
<rect x="99" y="125" width="2" height="2" fill="#b02a24"/>
<rect x="149" y="5" width="2" height="2" fill="#b02a24"/>
<rect x="148" y="13" width="2" height="2" fill="#b02a24"/>
<rect x="287" y="5" width="2" height="2" fill="#b02a24"/>
<rect x="234" y="29" width="2" height="2" fill="#b02a24"/>
<rect x="165" y="34" width="2" height="2" fill="#b02a24"/>
<rect x="148" y="37" width="2" height="2" fill="#b02a24"/>
<rect x="148" y="41" width="2" height="2" fill="#b02a24"/>
<rect x="168" y="38" width="2" height="2" fill="#b02a24"/>
<rect x="215" y="41" width="2" height="2" fill="#b02a24"/>
<rect x="204" y="47" width="2" height="2" fill="#b02a24"/>
<rect x="154" y="51" width="2" height="2" fill="#b02a24"/>
<rect x="160" y="49" width="2" height="2" fill="#b02a24"/>
<rect x="165" y="51" width="2" height="2" fill="#b02a24"/>
<rect x="147" y="49" width="2" height="2" fill="#b02a24"/>
<rect x="174" y="54" width="2" height="2" fill="#b02a24"/>
<rect x="180" y="54" width="2" height="2" fill="#b02a24"/>
<rect x="180" y="58" width="2" height="2" fill="#b02a24"/>
<rect x="189" y="56" width="2" height="2" fill="#b02a24"/>
<rect x="196" y="54" width="2" height="2" fill="#b02a24"/>
<rect x="200" y="60" width="2" height="2" fill="#b02a24"/>
<rect x="187" y="60" width="2" height="2" fill="#b02a24"/>
<rect x="210" y="54" width="2" height="2" fill="#b02a24"/>
<rect x="212" y="51" width="2" height="2" fill="#b02a24"/>
<rect x="210" y="60" width="2" height="2" fill="#b02a24"/>
<rect x="205" y="65" width="2" height="2" fill="#b02a24"/>
<rect x="167" y="62" width="2" height="2" fill="#b02a24"/>
<rect x="148" y="60" width="2" height="2" fill="#b02a24"/>
<rect x="160" y="69" width="2" height="2" fill="#b02a24"/>
<rect x="149" y="70" width="2" height="2" fill="#b02a24"/>
<rect x="164" y="74" width="2" height="2" fill="#b02a24"/>
<rect x="147" y="76" width="2" height="2" fill="#b02a24"/>
<rect x="155" y="80" width="2" height="2" fill="#b02a24"/>
<rect x="215" y="71" width="2" height="2" fill="#b02a24"/>
<rect x="217" y="72" width="2" height="2" fill="#b02a24"/>
<rect x="222" y="69" width="2" height="2" fill="#b02a24"/>
<rect x="229" y="67" width="2" height="2" fill="#b02a24"/>
<rect x="227" y="73" width="2" height="2" fill="#b02a24"/>
<rect x="240" y="67" width="2" height="2" fill="#b02a24"/>
<rect x="246" y="63" width="2" height="2" fill="#b02a24"/>
<rect x="249" y="56" width="2" height="2" fill="#b02a24"/>
<rect x="210" y="78" width="2" height="2" fill="#b02a24"/>
<rect x="209" y="81" width="2" height="2" fill="#b02a24"/>
<rect x="207" y="89" width="2" height="2" fill="#b02a24"/>
<rect x="253" y="87" width="2" height="2" fill="#b02a24"/>
<rect x="253" y="89" width="2" height="2" fill="#b02a24"/>
<rect x="148" y="99" width="2" height="2" fill="#b02a24"/>
<rect x="180" y="104" width="2" height="2" fill="#b02a24"/>
<rect x="211" y="98" width="2" height="2" fill="#b02a24"/>
<rect x="219" y="103" width="2" height="2" fill="#b02a24"/>
<rect x="240" y="100" width="2" height="2" fill="#b02a24"/>
<rect x="249" y="99" width="2" height="2" fill="#b02a24"/>
<rect x="212" y="108" width="2" height="2" fill="#b02a24"/>
<rect x="242" y="108" width="2" height="2" fill="#b02a24"/>
<rect x="148" y="114" width="2" height="2" fill="#b02a24"/>
<rect x="198" y="116" width="2" height="2" fill="#b02a24"/>
<rect x="219" y="116" width="2" height="2" fill="#b02a24"/>
<rect x="246" y="116" width="2" height="2" fill="#b02a24"/>
<rect x="195" y="122" width="2" height="2" fill="#b02a24"/>
<rect x="212" y="126" width="2" height="2" fill="#b02a24"/>
<rect x="20" y="125" width="2" height="2" fill="#b02a24"/>
<rect x="99" y="125" width="2" height="2" fill="#b02a24"/>
<rect x="134" y="125" width="2" height="2" fill="#b02a24"/>
<rect x="77" y="132" width="2" height="2" fill="#b02a24"/>
<rect x="82" y="134" width="2" height="2" fill="#b02a24"/>
<rect x="52" y="140" width="2" height="2" fill="#b02a24"/>
<rect x="49" y="141" width="2" height="2" fill="#b02a24"/>
<rect x="104" y="138" width="2" height="2" fill="#b02a24"/>
<rect x="133" y="140" width="2" height="2" fill="#b02a24"/>
<rect x="141" y="141" width="2" height="2" fill="#b02a24"/>
<rect x="149" y="143" width="2" height="2" fill="#b02a24"/>
<rect x="17" y="156" width="2" height="2" fill="#b02a24"/>
<rect x="19" y="155" width="2" height="2" fill="#b02a24"/>
<rect x="54" y="156" width="2" height="2" fill="#b02a24"/>
<rect x="54" y="158" width="2" height="2" fill="#b02a24"/>
<rect x="84" y="167" width="2" height="2" fill="#b02a24"/>
<rect x="109" y="169" width="2" height="2" fill="#b02a24"/>
<rect x="37" y="174" width="2" height="2" fill="#b02a24"/>
<rect x="62" y="187" width="2" height="2" fill="#b02a24"/>
<rect x="101" y="203" width="2" height="2" fill="#b02a24"/>
<rect x="27" y="209" width="2" height="2" fill="#b02a24"/>
<rect x="13" y="214" width="2" height="2" fill="#b02a24"/>
<rect x="62" y="214" width="2" height="2" fill="#b02a24"/>
<rect x="114" y="212" width="2" height="2" fill="#b02a24"/>
<rect x="114" y="216" width="2" height="2" fill="#b02a24"/>
<rect x="145" y="214" width="2" height="2" fill="#b02a24"/>
<rect x="30" y="230" width="2" height="2" fill="#b02a24"/>
<rect x="59" y="236" width="2" height="2" fill="#b02a24"/>
<rect x="194" y="124" width="2" height="2" fill="#b02a24"/>
<rect x="212" y="127" width="2" height="2" fill="#b02a24"/>
<rect x="215" y="129" width="2" height="2" fill="#b02a24"/>
<rect x="191" y="133" width="2" height="2" fill="#b02a24"/>
<rect x="194" y="133" width="2" height="2" fill="#b02a24"/>
<rect x="202" y="136" width="2" height="2" fill="#b02a24"/>
<rect x="222" y="133" width="2" height="2" fill="#b02a24"/>
<rect x="159" y="137" width="2" height="2" fill="#b02a24"/>
<rect x="149" y="142" width="2" height="2" fill="#b02a24"/>
<rect x="149" y="145" width="2" height="2" fill="#b02a24"/>
<rect x="250" y="140" width="2" height="2" fill="#b02a24"/>
<rect x="173" y="156" width="2" height="2" fill="#b02a24"/>
<rect x="176" y="156" width="2" height="2" fill="#b02a24"/>
<rect x="180" y="156" width="2" height="2" fill="#b02a24"/>
<rect x="197" y="158" width="2" height="2" fill="#b02a24"/>
<rect x="222" y="156" width="2" height="2" fill="#b02a24"/>
<rect x="224" y="156" width="2" height="2" fill="#b02a24"/>
<rect x="231" y="156" width="2" height="2" fill="#b02a24"/>
<rect x="246" y="152" width="2" height="2" fill="#b02a24"/>
<rect x="256" y="156" width="2" height="2" fill="#b02a24"/>
<rect x="269" y="156" width="2" height="2" fill="#b02a24"/>
<rect x="165" y="162" width="2" height="2" fill="#b02a24"/>
<rect x="155" y="166" width="2" height="2" fill="#b02a24"/>
<rect x="207" y="165" width="2" height="2" fill="#b02a24"/>
<rect x="261" y="165" width="2" height="2" fill="#b02a24"/>
<rect x="159" y="170" width="2" height="2" fill="#b02a24"/>
<rect x="163" y="178" width="2" height="2" fill="#b02a24"/>
<rect x="207" y="174" width="2" height="2" fill="#b02a24"/>
<rect x="191" y="178" width="2" height="2" fill="#b02a24"/>
<rect x="194" y="178" width="2" height="2" fill="#b02a24"/>
<rect x="205" y="179" width="2" height="2" fill="#b02a24"/>
<rect x="247" y="176" width="2" height="2" fill="#b02a24"/>
<rect x="230" y="181" width="2" height="2" fill="#b02a24"/>
<rect x="237" y="181" width="2" height="2" fill="#b02a24"/>
<rect x="261" y="179" width="2" height="2" fill="#b02a24"/>
<rect x="172" y="184" width="2" height="2" fill="#b02a24"/>
<rect x="173" y="185" width="2" height="2" fill="#b02a24"/>
<rect x="170" y="189" width="2" height="2" fill="#b02a24"/>
<rect x="183" y="185" width="2" height="2" fill="#b02a24"/>
<rect x="184" y="188" width="2" height="2" fill="#b02a24"/>
<rect x="251" y="189" width="2" height="2" fill="#b02a24"/>
<rect x="239" y="192" width="2" height="2" fill="#b02a24"/>
<rect x="175" y="196" width="2" height="2" fill="#b02a24"/>
<rect x="200" y="196" width="2" height="2" fill="#b02a24"/>
<rect x="178" y="201" width="2" height="2" fill="#b02a24"/>
<rect x="180" y="202" width="2" height="2" fill="#b02a24"/>
<rect x="183" y="202" width="2" height="2" fill="#b02a24"/>
<rect x="177" y="207" width="2" height="2" fill="#b02a24"/>
<rect x="182" y="208" width="2" height="2" fill="#b02a24"/>
<rect x="185" y="206" width="2" height="2" fill="#b02a24"/>
<rect x="170" y="201" width="2" height="2" fill="#b02a24"/>
<rect x="201" y="202" width="2" height="2" fill="#b02a24"/>
<rect x="211" y="208" width="2" height="2" fill="#b02a24"/>
<rect x="269" y="205" width="2" height="2" fill="#b02a24"/>
<rect x="153" y="210" width="2" height="2" fill="#b02a24"/>
<rect x="175" y="214" width="2" height="2" fill="#b02a24"/>
<rect x="226" y="214" width="2" height="2" fill="#b02a24"/>
<rect x="188" y="219" width="2" height="2" fill="#b02a24"/>
<rect x="160" y="231" width="2" height="2" fill="#b02a24"/>
<rect x="194" y="243" width="2" height="2" fill="#b02a24"/>
<rect x="197" y="238" width="2" height="2" fill="#b02a24"/>
<rect x="0" y="103" width="2" height="2" fill="#e06020"/>
<rect x="0" y="106" width="2" height="2" fill="#e06020"/>
<rect x="1" y="109" width="2" height="2" fill="#e06020"/>
<rect x="0" y="112" width="2" height="2" fill="#e06020"/>
<rect x="2" y="115" width="2" height="2" fill="#e06020"/>
<rect x="0" y="118" width="2" height="2" fill="#e06020"/>
<rect x="1" y="121" width="2" height="2" fill="#e06020"/>
<rect x="3" y="108" width="2" height="2" fill="#e06020"/>
<rect x="84" y="127" width="2" height="2" fill="#f0d070"/>
<rect x="89" y="163" width="2" height="2" fill="#f0d070"/>
<rect x="10" y="178" width="2" height="2" fill="#f0d070"/>
<rect x="2" y="189" width="2" height="2" fill="#f0d070"/>
<rect x="187" y="241" width="2" height="2" fill="#f0d070"/>
<rect x="106" y="80" width="2" height="2" fill="#f0d070"/>
<rect x="123" y="123" width="2" height="2" fill="#f4ecc0"/>
<rect x="242" y="22" width="2" height="2" fill="#f4ecc0"/>
<rect x="30" y="192" width="2" height="2" fill="#f4ecc0"/>
<rect x="290" y="185" width="2" height="2" fill="#f4ecc0"/>
<rect x="285" y="243" width="2" height="2" fill="#f4ecc0"/>
<rect x="146" y="120" width="2" height="2" fill="#f4ecc0"/>
</svg>
<div class="t" style="right:424px;top:874px;text-align:right">0</div>
<div class="a" style="left:352px;top:881px;width:5px;height:1px;background:#222"></div>
<div class="t" style="right:424px;top:910.4px;text-align:right">20</div>
<div class="a" style="left:352px;top:917px;width:5px;height:1px;background:#222"></div>
<div class="t" style="right:424px;top:946.8px;text-align:right">40</div>
<div class="a" style="left:352px;top:954px;width:5px;height:1px;background:#222"></div>
<div class="t" style="right:424px;top:983.2px;text-align:right">60</div>
<div class="a" style="left:352px;top:990px;width:5px;height:1px;background:#222"></div>
<div class="t" style="right:424px;top:1019.6px;text-align:right">80</div>
<div class="a" style="left:352px;top:1027px;width:5px;height:1px;background:#222"></div>
<div class="t" style="right:424px;top:1056px;text-align:right">100</div>
<div class="a" style="left:352px;top:1063px;width:5px;height:1px;background:#222"></div>
<div class="t" style="right:424px;top:1092.4px;text-align:right">120</div>
<div class="a" style="left:352px;top:1099px;width:5px;height:1px;background:#222"></div>
<div class="t" style="right:424px;top:1128.8px;text-align:right">140</div>
<div class="a" style="left:352px;top:1136px;width:5px;height:1px;background:#222"></div>
<div class="a" style="left:359px;top:1137px;width:1px;height:6px;background:#222"></div>
<div class="t" style="left:359.5px;top:1145px;width:40px;margin-left:-20px;text-align:center">0</div>
<div class="a" style="left:393px;top:1137px;width:1px;height:6px;background:#222"></div>
<div class="t" style="left:393.17px;top:1145px;width:40px;margin-left:-20px;text-align:center">20</div>
<div class="a" style="left:426px;top:1137px;width:1px;height:6px;background:#222"></div>
<div class="t" style="left:426.84px;top:1145px;width:40px;margin-left:-20px;text-align:center">40</div>
<div class="a" style="left:460px;top:1137px;width:1px;height:6px;background:#222"></div>
<div class="t" style="left:460.51px;top:1145px;width:40px;margin-left:-20px;text-align:center">60</div>
<div class="a" style="left:494px;top:1137px;width:1px;height:6px;background:#222"></div>
<div class="t" style="left:494.18px;top:1145px;width:40px;margin-left:-20px;text-align:center">80</div>
<div class="a" style="left:527px;top:1137px;width:1px;height:6px;background:#222"></div>
<div class="t" style="left:527.85px;top:1145px;width:40px;margin-left:-20px;text-align:center">100</div>
<div class="a" style="left:561px;top:1137px;width:1px;height:6px;background:#222"></div>
<div class="t" style="left:561.52px;top:1145px;width:40px;margin-left:-20px;text-align:center">120</div>
<div class="a" style="left:595px;top:1137px;width:1px;height:6px;background:#222"></div>
<div class="t" style="left:595.19px;top:1145px;width:40px;margin-left:-20px;text-align:center">140</div>
<div class="a" style="left:628px;top:1137px;width:1px;height:6px;background:#222"></div>
<div class="t" style="left:628.86px;top:1145px;width:40px;margin-left:-20px;text-align:center">160</div>
<div class="a" style="left:662px;top:1137px;width:1px;height:6px;background:#222"></div>
<div class="t" style="left:662.53px;top:1145px;width:40px;margin-left:-20px;text-align:center">180</div>
<div class="a" style="left:688px;top:864px;width:26px;height:153px;background:#111;border:1px solid #111"></div>
<div class="a" style="left:690px;top:866px;width:22px;height:3px;background:#fff"></div>
<div class="a" style="left:690px;top:871px;width:22px;height:144px;background:linear-gradient(#ffec78 0,#ffd848 12%,#ffb420 36%,#ff8a10 42%,#ff5808 56%,#f01800 68%,#c00000 76%,#700000 84%,#280000 93%,#000 100%)"></div>
<div class="a" style="left:714px;top:871px;width:6px;height:1px;background:#222"></div>
<div class="t" style="left:721px;top:863.5px">50</div>
<div class="a" style="left:714px;top:927px;width:6px;height:1px;background:#222"></div>
<div class="t" style="left:721px;top:919.2px">10</div>
<div class="a" style="left:714px;top:968px;width:6px;height:1px;background:#222"></div>
<div class="t" style="left:721px;top:960.1px">3</div>
<div class="a" style="left:714px;top:990px;width:6px;height:1px;background:#222"></div>
<div class="t" style="left:721px;top:983px">2</div>
<div class="a" style="left:714px;top:1012px;width:6px;height:1px;background:#222"></div>
<div class="t" style="left:721px;top:1004px">1</div>
<div class="t" style="left:747px;top:940px;transform:translate(-50%,-50%) rotate(90deg)">Amplitude</div>
<div class="t" style="left:718px;top:1028px;font-size:12.5px">State</div>
<div class="a" style="left:705px;top:1042px;width:14px;height:25px;background:linear-gradient(90deg,#a8a8a8,#e4e4e4 50%,#a8a8a8);border-radius:7px;border:1px solid #999"></div>
<svg class="a" style="left:705px;top:1042px" width="14" height="25"><path d="M4 10L7 4.5L10 10" stroke="#fff" stroke-width="1.4" fill="none"/><path d="M4 15L7 20.5L10 15" stroke="#fff" stroke-width="1.4" fill="none"/><path d="M4.5 10.5L7 6L9.5 10.5M4.5 14.5L7 19L9.5 14.5" stroke="#777" stroke-width="0.6" fill="none"/></svg>
<div class="a" style="left:719px;top:1044px;width:46px;height:21px;background:#fff;border:1px solid #9a9a9a;border-top:2px solid #8a8a8a"></div>
<div class="t" style="left:723px;top:1048px;font-size:12.5px">Idle</div>
<div class="a" style="left:717px;top:1074px;width:48px;height:21px;background:linear-gradient(#e4e4e4,#c8c8c8);border:1px solid #6a6a6a;box-shadow:inset -1px -1px 0 #999"></div>
<div class="t" style="left:726px;top:1078px;font-size:12.5px;color:#d0203a">STOP</div>
<div class="t" style="left:691px;top:1108px;font-size:12.5px">last mod</div>
<div class="a" style="left:690px;top:1124px;width:85px;height:36px;background:#d8d8d8;border-top:2px solid #9a9a9a;border-left:2px solid #a0a0a0;border-bottom:1px solid #e8e8e8"></div>
<div class="t" style="left:696px;top:1129px;font-size:12.5px;letter-spacing:-0.75px">12:04:04.000</div>
<div class="t" style="left:696px;top:1144px;font-size:12.5px;letter-spacing:-0.6px">03/07/2021</div>
</body></html>
